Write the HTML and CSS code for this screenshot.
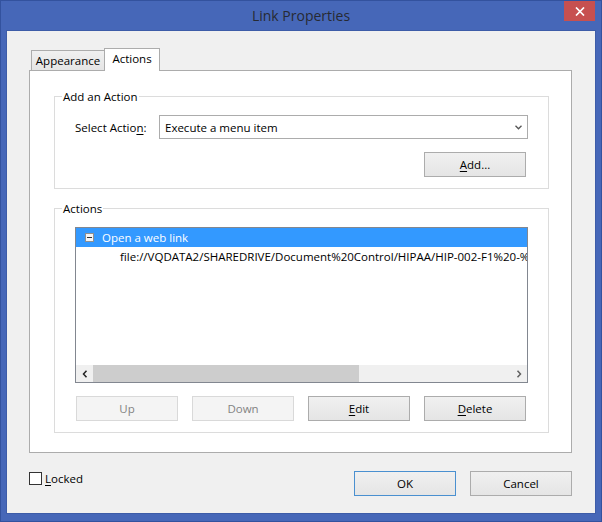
FILE: index.html
```html
<!DOCTYPE html>
<html>
<head>
<meta charset="utf-8">
<title>Link Properties</title>
<link rel="stylesheet" href="styles.css">
</head>
<body>
<div class="window">
  <div class="titlebar">
    <span class="title">Link Properties</span>
    <div class="close" aria-label="Close">
      <svg width="10" height="9" viewBox="0 0 10 9"><path d="M1 0.5 L9 8.5 M9 0.5 L1 8.5" stroke="#fff" stroke-width="1.7" fill="none"/></svg>
    </div>
  </div>
  <div class="client">
    <div class="tabs">
      <div class="tab tab-appearance">Appearance</div>
      <div class="tab tab-actions active">Actions</div>
    </div>
    <div class="panel">
      <div class="group group-add">
        <div class="group-title">Add an Action</div>
        <div class="select-row">
          <span class="select-label">Select Actio<u>n</u>:</span>
          <div class="combo">
            <span class="combo-text">Execute a menu item</span>
            <svg class="combo-arrow" width="7" height="5" viewBox="0 0 7 5"><path d="M0.5 0.8 L3.5 3.8 L6.5 0.8" stroke="#555" stroke-width="1.3" fill="none"/></svg>
          </div>
        </div>
        <div class="add-row"><div class="btn"><u>A</u>dd...</div></div>
      </div>
      <div class="group group-actions">
        <div class="group-title">Actions</div>
        <div class="tree">
          <div class="tree-rows">
            <div class="row selected"><span class="toggle"><span class="minus"></span></span><span>Open a web link</span></div>
            <div class="row child">file://VQDATA2/SHAREDRIVE/Document%20Control/HIPAA/HIP-002-F1%20-%20Request%20Form.pdf</div>
          </div>
          <div class="hscroll">
            <div class="sb-arrow">
              <svg width="6" height="8" viewBox="0 0 6 8"><path d="M4.5 0.8 L1.5 4 L4.5 7.2" stroke="#222" stroke-width="1.5" fill="none"/></svg>
            </div>
            <div class="sb-thumb"></div>
            <div class="sb-track"></div>
            <div class="sb-arrow">
              <svg width="6" height="8" viewBox="0 0 6 8"><path d="M1.5 0.8 L4.5 4 L1.5 7.2" stroke="#606060" stroke-width="1.5" fill="none"/></svg>
            </div>
          </div>
        </div>
        <div class="btn-row">
          <div class="btn disabled">Up</div>
          <div class="btn disabled">Down</div>
          <div class="btn"><u>E</u>dit</div>
          <div class="btn"><u>D</u>elete</div>
        </div>
      </div>
    </div>
    <div class="footer">
      <div class="check"><span class="box"></span><span class="check-label"><u>L</u>ocked</span></div>
      <div class="footer-btns">
        <div class="btn default">OK</div>
        <div class="btn">Cancel</div>
      </div>
    </div>
  </div>
</div>
</body>
</html>
```

FILE: styles.css
```css
* { box-sizing: border-box; }
html, body { margin: 0; padding: 0; }
body {
  width: 602px;
  height: 522px;
  overflow: hidden;
  font-family: "Open Sans", "Noto Sans", sans-serif;
  font-size: 11.5px;
  color: #000;
}
u { text-decoration: underline; text-underline-offset: 2px; }

.window {
  width: 602px;
  height: 522px;
  background: #4667b8;
  border: 1px solid #33529e;
  padding: 0 6px 8px;
  display: flex;
  flex-direction: column;
}

.titlebar {
  height: 30px;
  flex: none;
  display: grid;
  grid-template-columns: 1fr auto 1fr;
  align-items: start;
}
.title {
  grid-column: 2;
  font-size: 14px;
  line-height: 30px;
  color: #262a33;
}
.close {
  grid-column: 3;
  justify-self: end;
  width: 31px;
  height: 20px;
  background: #c75050;
  display: flex;
  align-items: center;
  justify-content: center;
}

.client {
  flex: 1;
  background: #f0f0f0;
  box-shadow: 0 0 0 1px #3d5ca8;
  padding: 17px 23px 0 22px;
}

.tabs {
  display: flex;
  align-items: flex-end;
  height: 22px;
  padding-left: 2px;
  position: relative;
  z-index: 1;
}
.tab {
  border: 1px solid #acacac;
  border-bottom: none;
  line-height: 19px;
  text-align: center;
  background: #f0f0f0;
}
.tab-appearance {
  width: 73px;
  height: 20px;
  border-right: none;
  background: linear-gradient(#f0f0f0, #e5e5e5);
}
.tab-actions {
  width: 56px;
  height: 23px;
  margin-bottom: -1px;
  background: #fff;
  line-height: 20px;
}

.panel {
  width: 543px;
  background: #fff;
  border: 1px solid #acacac;
  padding: 25px 22px 19px 24px;
}

.group {
  width: 495px;
  border: 1px solid #dcdcdc;
  padding: 0 20px 11px 20px;
}
.group-actions { margin-top: 19px; }
.group-title {
  width: fit-content;
  margin: -8px 0 0 -13px;
  padding: 0 1px;
  line-height: 16px;
  background: #fff;
}

.select-row {
  display: flex;
  align-items: center;
  margin-top: 10px;
}
.select-label { width: 84px; flex: none; }
.combo {
  flex: 1;
  height: 24px;
  border: 1px solid #acacac;
  background: #fff;
  display: flex;
  align-items: center;
  padding: 0 5px 0 5px;
}
.combo-text { flex: 1; }

.add-row {
  display: flex;
  justify-content: flex-end;
  padding-right: 2px;
  margin-top: 13px;
}

.btn {
  width: 102px;
  height: 25px;
  border: 1px solid #acacac;
  background: linear-gradient(#f0f0f0, #e5e5e5);
  display: flex;
  align-items: center;
  justify-content: center;
  line-height: 16px;
}
.btn.disabled {
  border-color: #d9d9d9;
  background: #f4f4f4;
  color: #838383;
}
.btn.default { border-color: #4a90d0; }

.tree {
  margin-top: 10px;
  height: 156px;
  border: 1px solid #828790;
  background: #fff;
  display: flex;
  flex-direction: column;
}
.tree-rows {
  flex: 1;
  overflow: hidden;
}
.row {
  height: 19px;
  line-height: 19px;
  white-space: nowrap;
  display: flex;
  align-items: center;
}
.row.selected {
  background: #3399ff;
  color: #fff;
  padding-left: 9px;
}
.toggle {
  width: 9px;
  height: 9px;
  border: 1px solid #8f8f8f;
  background: #f4f4f4;
  margin-right: 8px;
  display: flex;
  align-items: center;
  justify-content: center;
}
.minus { width: 5px; height: 1px; background: #333; }
.row.child { padding-left: 44px; }

.hscroll {
  height: 17px;
  flex: none;
  display: flex;
  background: #f0f0f0;
}
.sb-arrow {
  width: 17px;
  display: flex;
  align-items: center;
  justify-content: center;
}
.sb-thumb { width: 266px; background: #cdcdcd; }
.sb-track { flex: 1; }

.btn-row {
  display: flex;
  gap: 14px;
  margin-top: 13px;
  padding-left: 1px;
}

.footer {
  display: flex;
  justify-content: space-between;
  align-items: flex-start;
  margin-top: 18px;
}
.check {
  display: flex;
  align-items: center;
  margin-top: 1px;
  height: 13px;
}
.box {
  width: 13px;
  height: 13px;
  border: 1px solid #333;
  background: #fff;
  margin-right: 3px;
}
.check-label { line-height: 16px; }
.footer-btns { display: flex; gap: 14px; }
```
